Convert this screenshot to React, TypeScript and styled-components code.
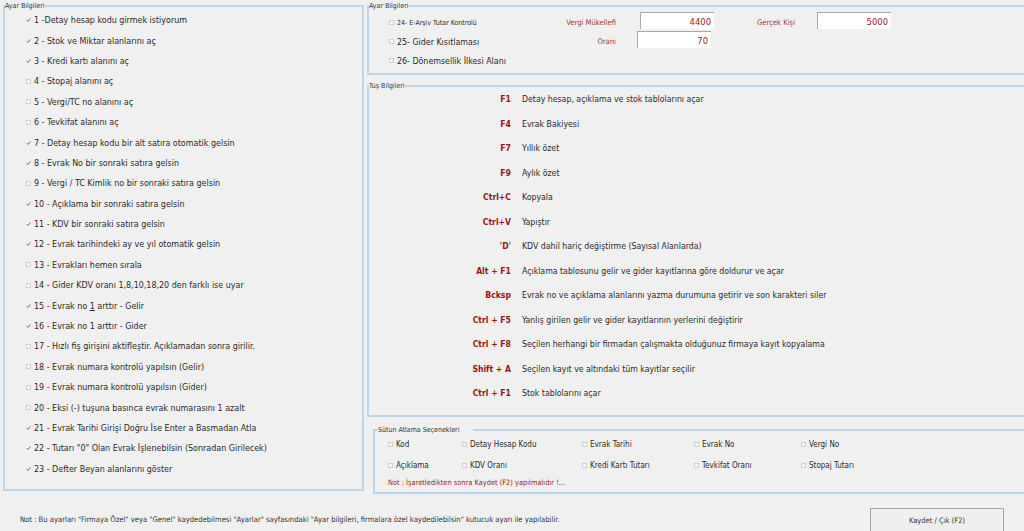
import * as React from 'react';
import styled, { createGlobalStyle } from 'styled-components';

const FONT = '"DejaVu Sans Condensed", "DejaVu Sans", "Liberation Sans", sans-serif';

const GlobalStyle = createGlobalStyle`
  html, body { margin: 0; padding: 0; background: #f0f0f0; }
  body { font-family: ${FONT}; color: #2b2b2b; }
  #root { width: 1024px; height: 531px; overflow: hidden; }
`;

const Window = styled.div`
  width: 1024px;
  height: 531px;
  overflow: hidden;
  display: flex;
  flex-direction: column;
`;

const Main = styled.div`
  display: flex;
  gap: 3px;
  padding: 2px 0 0 3px;
  height: 490px;
`;

const Group = styled.fieldset<{ $offset?: number }>`
  margin: 0 0 0 ${(p) => p.$offset || 0}px;
  padding: 0;
  min-width: 0;
  border: 2px solid #bcd6ec;
  box-sizing: border-box;
`;

const Legend = styled.legend<{ $gap?: number; $indent?: number }>`
  font-size: 7px;
  line-height: 8px;
  color: #333;
  padding: 0 ${(p) => p.$gap || 0}px 0 0;
  margin-left: ${(p) => p.$indent || 0}px;
`;

const LeftGroup = styled(Group)`
  flex: none;
  width: 361px;
  height: 489px;
`;

const RightColumn = styled.div`
  width: 664px;
  flex: none;
  display: flex;
  flex-direction: column;
`;

const ItemList = styled.div`
  display: flex;
  flex-direction: column;
  padding: 0 0 0 21px;
`;

const Item = styled.div`
  height: 20.4px;
  display: flex;
  align-items: center;
  gap: 3px;
  font-size: 8.9px;
  white-space: nowrap;
`;

const Box = styled.span<{ $checked: boolean }>`
  width: 5px;
  height: 5px;
  flex: none;
  display: inline-flex;
  align-items: center;
  justify-content: center;
  box-sizing: border-box;
  border: ${(p) => (p.$checked ? 'none' : '1px solid #cfcfcf')};
  background: ${(p) => (p.$checked ? 'transparent' : '#f7f7f7')};
  svg { display: block; }
`;

const Check = ({ checked }: { checked: boolean }) => (
  <Box $checked={checked}>
    {checked && (
      <svg width="6" height="6" viewBox="0 0 6 6">
        <path d="M0.8 3.2 L2.3 4.7 L5.2 1.2" fill="none" stroke="#666" strokeWidth="1.1" />
      </svg>
    )}
  </Box>
);

const TopGroup = styled(Group)`
  height: 73px;
  flex: none;
`;

const TopRows = styled.div`
  display: flex;
  flex-direction: column;
  margin-top: 3px;
`;

const TopRow = styled.div`
  height: 19px;
  display: flex;
  align-items: center;
`;

const Option = styled.div<{ $size: number }>`
  width: 176px;
  box-sizing: border-box;
  padding-left: 20px;
  display: flex;
  align-items: center;
  gap: 3px;
  font-size: ${(p) => p.$size}px;
  white-space: nowrap;
`;

const FieldLabel = styled.span<{ $align?: string; $width: number; $space?: number }>`
  width: ${(p) => p.$width}px;
  margin-left: ${(p) => p.$space || 0}px;
  text-align: ${(p) => p.$align || 'right'};
  color: #a23a3a;
  font-size: 7.6px;
  white-space: nowrap;
`;

const NumberBox = styled.div<{ $space: number }>`
  width: 74px;
  height: 17px;
  margin-left: ${(p) => p.$space}px;
  margin-top: -4px;
  box-sizing: border-box;
  background: #fff;
  border-top: 1px solid #a8a8a8;
  border-left: 1px solid #a8a8a8;
  display: flex;
  align-items: center;
  justify-content: flex-end;
  padding-right: 3px;
  color: #a01c1c;
  font-size: 9.4px;
`;

const KeyGroup = styled(Group)`
  margin-top: 7px;
  height: 335px;
  flex: none;
`;

const KeyGrid = styled.div`
  display: grid;
  grid-template-columns: 142px 1fr;
  column-gap: 11px;
  grid-auto-rows: 24.5px;
  align-items: center;
  margin-top: -3px;
`;

const KeyName = styled.span`
  text-align: right;
  color: #9c1414;
  font-weight: bold;
  font-size: 8.6px;
  white-space: nowrap;
`;

const KeyText = styled.span`
  font-size: 8.7px;
  white-space: nowrap;
`;

const SkipGroup = styled(Group)`
  margin-top: 9px;
  height: 68px;
  flex: none;
`;

const SkipGrid = styled.div`
  display: grid;
  grid-template-columns: 74px 120px 112px 107px 120px;
  grid-auto-rows: 21px;
  align-items: center;
  padding-left: 13px;
  margin-top: 0;
`;

const SkipItem = styled.div`
  display: flex;
  align-items: center;
  gap: 3px;
  font-size: 8px;
  white-space: nowrap;
`;

const RedNote = styled.div`
  padding-left: 13px;
  color: #a62020;
  font-size: 7.4px;
  line-height: 13px;
`;

const Footer = styled.div`
  flex: 1;
  display: flex;
  align-items: flex-start;
  justify-content: space-between;
  padding: 16px 20px 0 20px;
`;

const FooterNote = styled.div`
  font-size: 7.6px;
  line-height: 24px;
  color: #333;
  white-space: nowrap;
`;

const SaveButton = styled.button`
  width: 134px;
  height: 24px;
  box-sizing: border-box;
  border: 1px solid #a6a6a6;
  background: #efefef;
  font-family: ${FONT};
  font-size: 7.5px;
  color: #333;
  padding: 0;
`;

const settings: [string, boolean][] = [
  ['1 -Detay hesap kodu girmek istiyorum', true],
  ['2 - Stok ve Miktar alanlarını aç', true],
  ['3 - Kredi kartı alanını aç', true],
  ['4 - Stopaj alanını aç', false],
  ['5 - Vergi/TC no alanını aç', false],
  ['6 - Tevkifat alanını aç', false],
  ['7 - Detay hesap kodu bir alt satıra otomatik gelsin', true],
  ['8 - Evrak No bir sonraki satıra gelsin', true],
  ['9 - Vergi / TC Kimlik no bir sonraki satıra gelsin', false],
  ['10 - Açıklama bir sonraki satıra gelsin', true],
  ['11 - KDV bir sonraki satıra gelsin', true],
  ['12 - Evrak tarihindeki ay ve yıl otomatik gelsin', true],
  ['13 - Evrakları hemen sırala', false],
  ['14 - Gider KDV oranı 1,8,10,18,20 den farklı ise uyar', false],
  ['15 - Evrak no 1 arttır - Gelir', true],
  ['16 - Evrak no 1 arttır - Gider', true],
  ['17 - Hızlı fiş girişini aktifleştir. Açıklamadan sonra girilir.', false],
  ['18 - Evrak numara kontrolü yapılsın (Gelir)', false],
  ['19 - Evrak numara kontrolü yapılsın (Gider)', false],
  ['20 - Eksi (-) tuşuna basınca evrak numarasını 1 azalt', false],
  ['21 - Evrak Tarihi Girişi Doğru İse Enter a Basmadan Atla', true],
  ['22 - Tutarı "0" Olan Evrak İşlenebilsin (Sonradan Girilecek)', true],
  ['23 - Defter Beyan alanlarını göster', true],
];

const keys: [string, string][] = [
  ['F1', 'Detay hesap, açıklama ve stok tablolarını açar'],
  ['F4', 'Evrak Bakiyesi'],
  ['F7', 'Yıllık özet'],
  ['F9', 'Aylık özet'],
  ['Ctrl+C', 'Kopyala'],
  ['Ctrl+V', 'Yapıştır'],
  ["'D'", 'KDV dahil hariç değiştirme (Sayısal Alanlarda)'],
  ['Alt + F1', 'Açıklama tablosunu gelir ve gider kayıtlarına göre doldurur ve açar'],
  ['Bcksp', 'Evrak no ve açıklama alanlarını yazma durumuna getirir ve son karakteri siler'],
  ['Ctrl + F5', 'Yanlış girilen gelir ve gider kayıtlarının yerlerini değiştirir'],
  ['Ctrl + F8', 'Seçilen herhangi bir firmadan çalışmakta olduğunuz firmaya kayıt kopyalama'],
  ['Shift + A', 'Seçilen kayıt ve altındaki tüm kayıtlar seçilir'],
  ['Ctrl + F1', 'Stok tablolarını açar'],
];

const skipCols = [
  'Kod', 'Detay Hesap Kodu', 'Evrak Tarihi', 'Evrak No', 'Vergi No',
  'Açıklama', 'KDV Oranı', 'Kredi Kartı Tutarı', 'Tevkifat Oranı', 'Stopaj Tutarı',
];

const renderLabel = (text: string) => {
  // 15. satırdaki "1" altı çizili görünüyor
  if (text.startsWith('15 -')) {
    return (
      <span>
        15 - Evrak no <u>1</u> arttır - Gelir
      </span>
    );
  }
  return <span>{text}</span>;
};

export default function App() {
  return (
    <Window>
      <GlobalStyle />
      <Main>
        <LeftGroup>
          <Legend>Ayar Bilgileri</Legend>
          <ItemList>
            {settings.map(([text, checked]) => (
              <Item key={text}>
                <Check checked={checked} />
                {renderLabel(text)}
              </Item>
            ))}
          </ItemList>
        </LeftGroup>

        <RightColumn>
          <TopGroup>
            <Legend>Ayar Bilgileri</Legend>
            <TopRows>
              <TopRow>
                <Option $size={7}>
                  <Check checked={false} />
                  24- E-Arşiv Tutar Kontrolü
                </Option>
                <FieldLabel $width={71}>Vergi Mükellefi</FieldLabel>
                <NumberBox $space={24}>4400</NumberBox>
                <FieldLabel $width={60} $space={43} $align="left">Gerçek Kişi</FieldLabel>
                <NumberBox $space={0}>5000</NumberBox>
              </TopRow>
              <TopRow>
                <Option $size={8.8}>
                  <Check checked={false} />
                  25- Gider Kısıtlaması
                </Option>
                <FieldLabel $width={71}>Oranı</FieldLabel>
                <NumberBox $space={21}>70</NumberBox>
              </TopRow>
              <TopRow>
                <Option $size={8.8}>
                  <Check checked={false} />
                  26- Dönemsellik İlkesi Alanı
                </Option>
              </TopRow>
            </TopRows>
          </TopGroup>

          <KeyGroup>
            <Legend>Tuş Bilgileri</Legend>
            <KeyGrid>
              {keys.map(([k, d]) => (
                <React.Fragment key={k}>
                  <KeyName>{k}</KeyName>
                  <KeyText>{d}</KeyText>
                </React.Fragment>
              ))}
            </KeyGrid>
          </KeyGroup>

          <SkipGroup $offset={6}>
            <Legend $indent={3} $gap={14}>Sütun Atlama Seçenekleri</Legend>
            <SkipGrid>
              {skipCols.map((c) => (
                <SkipItem key={c}>
                  <Check checked={false} />
                  {c}
                </SkipItem>
              ))}
            </SkipGrid>
            <RedNote>Not : İşaretledikten sonra Kaydet (F2) yapılmalıdır !...</RedNote>
          </SkipGroup>
        </RightColumn>
      </Main>

      <Footer>
        <FooterNote>
          Not : Bu ayarları "Firmaya Özel" veya "Genel" kaydedebilmesi "Ayarlar" sayfasındaki "Ayar bilgileri, firmalara özel kaydedilebilsin" kutucuk ayarı ile yapılabilir.
        </FooterNote>
        <SaveButton>Kaydet / Çık (F2)</SaveButton>
      </Footer>
    </Window>
  );
}
